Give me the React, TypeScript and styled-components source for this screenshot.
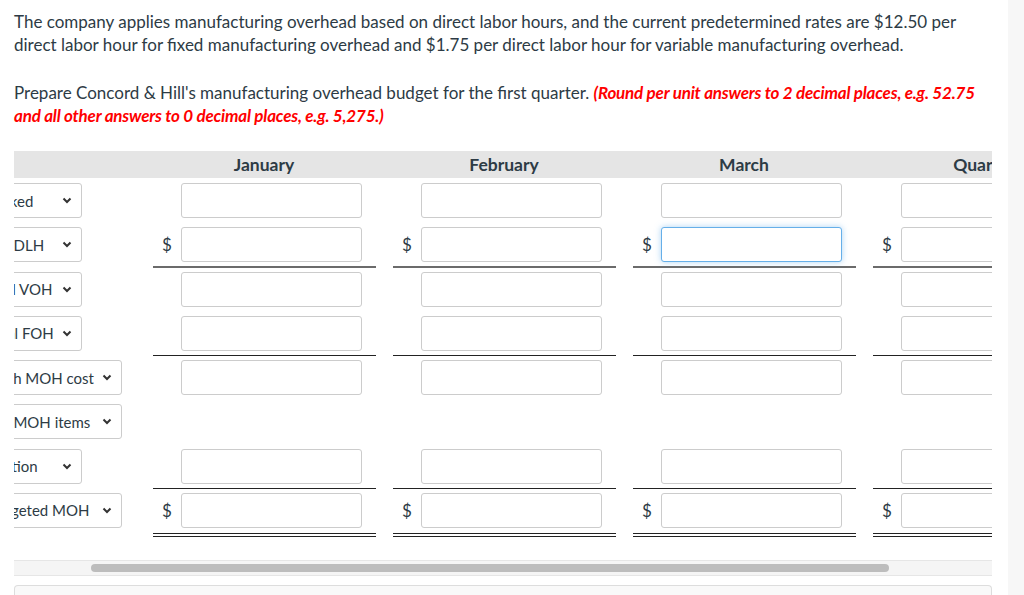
import React, { useLayoutEffect, useRef } from "react";
import styled, { createGlobalStyle, css } from "styled-components";

const GlobalStyle = createGlobalStyle`
  html, body {
    margin: 0;
    padding: 0;
    background: #fff;
  }
  body {
    font-family: Lato, "Noto Sans", sans-serif;
    color: #2d3b45;
  }
`;

const Page = styled.div`
  display: flex;
  min-height: 100vh;
  overflow: hidden;
`;

const Main = styled.main`
  flex: 1;
  min-width: 0;
  padding: 10px 16px 0 14px;
`;

const SideRail = styled.div`
  width: 16px;
  background: #f7f7f7;
`;

const Prompt = styled.p`
  margin: 0 0 24.5px;
  font-size: 17px;
  line-height: 23px;
`;

const Hint = styled.span`
  color: #ff0000;
  font-weight: 700;
  font-style: italic;
  letter-spacing: -0.2px;
`;

const ScrollArea = styled.div`
  overflow-x: hidden;
  padding-bottom: 28px;
`;

const Sheet = styled.div`
  width: 1244px;
`;

const HeaderRow = styled.div`
  display: grid;
  grid-template-columns: 284px repeat(4, 240px);
  align-items: center;
  height: 27px;
  background: #e5e5e5;
`;

const MonthHead = styled.div`
  text-align: center;
  font-size: 17.5px;
  font-weight: 700;
`;

const Row = styled.div`
  display: grid;
  grid-template-columns: 284px repeat(4, 240px);
  height: 44.29px;
`;

const LabelCell = styled.div`
  padding-top: 5px;
`;

const Select = styled.div<{ $wide?: boolean }>`
  display: flex;
  align-items: center;
  justify-content: space-between;
  box-sizing: border-box;
  width: ${(p) => (p.$wide ? 262 : 222)}px;
  height: 35px;
  padding: 0 9px 0 10px;
  border: 1px solid #cccccc;
  border-radius: 3px;
  background: #fff;
  font-size: 15px;
  white-space: nowrap;
  color: #2d3b45;
`;

const Chevron = () => (
  <svg width="10" height="7" viewBox="0 0 10 7">
    <path d="M1.5 1.5 L5 5 L8.5 1.5" fill="none" stroke="#333" strokeWidth="2" />
  </svg>
);

const ValueCell = styled.div`
  padding: 5px 8px 0 9px;
`;

type Line = "none" | "gray" | "single" | "double";

const lineStyles: Record<Line, ReturnType<typeof css>> = {
  none: css`
    border-bottom: none;
  `,
  gray: css`
    border-bottom: 2px solid #6b6b6b;
  `,
  single: css`
    border-bottom: 1px solid #222;
  `,
  double: css`
    padding-bottom: 5px;
    border-bottom: 4px double #222;
  `,
};

const AmountLine = styled.div<{ $line: Line }>`
  display: flex;
  align-items: center;
  padding-bottom: 4px;
  ${(p) => lineStyles[p.$line]}
`;

const Currency = styled.span`
  width: 28px;
  text-align: center;
  font-size: 17px;
`;

const Amount = styled.input<{ $focused?: boolean }>`
  box-sizing: border-box;
  width: 181px;
  height: 35px;
  margin: 0;
  padding: 0 8px;
  border: 1px solid #cccccc;
  border-radius: 3px;
  background: #fff;
  font: 15px Lato, sans-serif;
  outline: none;
  ${(p) =>
    p.$focused &&
    css`
      border-color: #66afe9;
      box-shadow: 0 0 6px rgba(102, 175, 233, 0.55);
    `}
`;

const Track = styled.div`
  display: flex;
  align-items: center;
  box-sizing: border-box;
  height: 16px;
  padding-left: 77px;
  border-top: 1px solid #e6e6e6;
  border-bottom: 1px solid #e6e6e6;
  background: #f5f5f5;
`;

const Thumb = styled.div`
  width: 798px;
  height: 8px;
  border-radius: 4px;
  background: #bdbdbd;
`;

const AnswerBox = styled.div`
  margin-top: 9px;
  height: 40px;
  border: 1px solid #dddddd;
  border-bottom: none;
  border-radius: 4px 4px 0 0;
  background: #f9f9f9;
`;

const months = ["January", "February", "March", "Quarter"];

interface BudgetRow {
  label: string;
  wide?: boolean;
  inputs?: boolean;
  dollar?: boolean;
  line: Line;
}

const rows: BudgetRow[] = [
  { label: "Total labor hours worked", inputs: true, line: "none" },
  { label: "Variable OH rate, per DLH", inputs: true, dollar: true, line: "gray" },
  { label: "Variable charges: total VOH", inputs: true, line: "none" },
  { label: "Fixed Overhead : Total FOH", inputs: true, line: "single" },
  { label: "Total budgeted, in cash MOH cost", wide: true, inputs: true, line: "none" },
  { label: "Less: Other non-cash MOH items", wide: true, inputs: false, line: "none" },
  { label: "Factory gear depreciation", inputs: true, line: "single" },
  { label: "Cash Payment of budgeted MOH", wide: true, inputs: true, dollar: true, line: "double" },
];

const App: React.FC = () => {
  const scrollRef = useRef<HTMLDivElement>(null);

  // the answer table is scrolled sideways, hiding most of the row labels
  useLayoutEffect(() => {
    if (scrollRef.current) scrollRef.current.scrollLeft = 154;
  }, []);

  return (
    <Page>
      <GlobalStyle />
      <Main>
        <Prompt>
          The company applies manufacturing overhead based on direct labor hours, and the current
          predetermined rates are $12.50 per direct labor hour for fixed manufacturing overhead and
          $1.75 per direct labor hour for variable manufacturing overhead.
        </Prompt>
        <Prompt>
          Prepare Concord &amp; Hill's manufacturing overhead budget for the first quarter.{" "}
          <Hint>
            (Round per unit answers to 2 decimal places, e.g. 52.75 and all other answers to 0
            decimal places, e.g. 5,275.)
          </Hint>
        </Prompt>

        <ScrollArea ref={scrollRef}>
          <Sheet>
            <HeaderRow>
              <div />
              {months.map((m) => (
                <MonthHead key={m}>{m}</MonthHead>
              ))}
            </HeaderRow>
            {rows.map((row, i) => (
              <Row key={i}>
                <LabelCell>
                  <Select $wide={row.wide}>
                    <span>{row.label}</span>
                    <Chevron />
                  </Select>
                </LabelCell>
                {months.map((m) => (
                  <ValueCell key={m}>
                    {row.inputs && (
                      <AmountLine $line={row.line}>
                        <Currency>{row.dollar ? "$" : ""}</Currency>
                        <Amount $focused={i === 1 && m === "March"} />
                      </AmountLine>
                    )}
                  </ValueCell>
                ))}
              </Row>
            ))}
          </Sheet>
        </ScrollArea>
        <Track>
          <Thumb />
        </Track>
        <AnswerBox />
      </Main>
      <SideRail />
    </Page>
  );
};

export default App;
